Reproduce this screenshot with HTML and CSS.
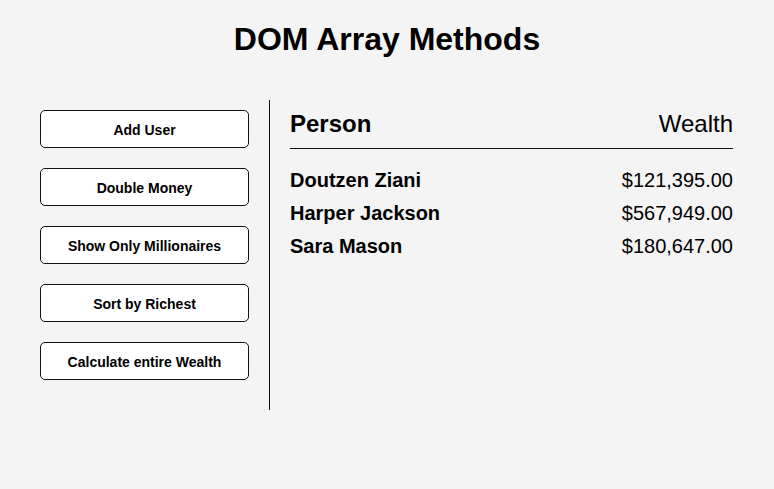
FILE: index.html
```
<!DOCTYPE html>
<html lang="en">
<head>
<meta charset="UTF-8">
<title>DOM Array Methods</title>
<link rel="stylesheet" href="styles.css">
</head>
<body>
<h1 class="title">DOM Array Methods</h1>
<div class="container">
  <aside class="sidebar">
    <button class="btn">Add User</button>
    <button class="btn">Double Money</button>
    <button class="btn">Show Only Millionaires</button>
    <button class="btn">Sort by Richest</button>
    <button class="btn">Calculate entire Wealth</button>
  </aside>
  <main class="main">
    <h2 class="header"><strong>Person</strong> Wealth</h2>
    <div class="person"><strong>Doutzen Ziani</strong> $121,395.00</div>
    <div class="person"><strong>Harper Jackson</strong> $567,949.00</div>
    <div class="person"><strong>Sara Mason</strong> $180,647.00</div>
  </main>
</div>
</body>
</html>
```
FILE: styles.css
```
* { box-sizing: border-box; }
body {
  margin: 0;
  background: #f4f4f4;
  font-family: "Liberation Sans", Arial, sans-serif;
  color: #000;
}
.title {
  margin: 0;
  padding-top: 21px;
  height: 100px;
  text-align: center;
  font-size: 32px;
  line-height: 37px;
  font-weight: bold;
}
.container {
  display: flex;
  margin: 0 21px 0 20px;
}
.sidebar {
  width: 250px;
  display: flex;
  flex-direction: column;
  gap: 20px;
  padding: 10px 20px 30px 20px;
  border-right: 1px solid #111;
}
.btn {
  height: 38px;
  width: 100%;
  background: #fff;
  border: 1px solid #111;
  border-radius: 5px;
  font-family: "Liberation Sans", Arial, sans-serif;
  font-size: 14px;
  font-weight: bold;
  color: #000;
  padding: 1px 0 0;
}
.main {
  flex: 1;
  padding: 0 20px;
}
.header {
  display: flex;
  justify-content: space-between;
  margin: 10px 0 0;
  padding-bottom: 10px;
  border-bottom: 1px solid #111;
  font-size: 24px;
  font-weight: normal;
  line-height: 28px;
}
.person {
  display: flex;
  justify-content: space-between;
  font-size: 20px;
  line-height: 33px;
}
.header + .person { margin-top: 15px; }
```
